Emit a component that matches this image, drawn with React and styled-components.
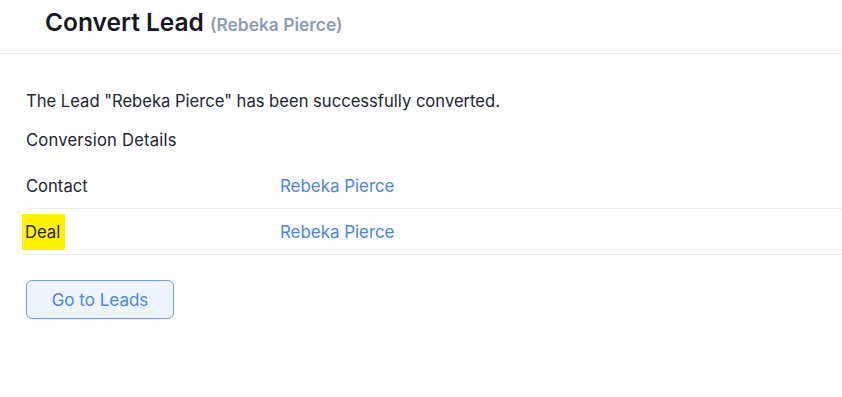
import React from "react";
import styled, { createGlobalStyle } from "styled-components";

const GlobalStyle = createGlobalStyle`
  html, body {
    margin: 0;
    padding: 0;
    background: #ffffff;
  }
  body {
    font-family: Inter, "Noto Sans", sans-serif;
    color: #1f2430;
  }
`;

const Page = styled.div`
  width: 842px;
  min-height: 397px;
  background: #ffffff;
`;

const Header = styled.header`
  display: flex;
  align-items: baseline;
  gap: 6px;
  height: 54px;
  box-sizing: border-box;
  padding: 7px 0 0 45px;
  border-bottom: 1px solid #ececec;
`;

const Title = styled.h1`
  margin: 0;
  font-size: 24.5px;
  font-weight: 600;
  color: #141824;
`;

const SubTitle = styled.span`
  font-size: 17.4px;
  font-weight: 600;
  color: #8e9bb6;
`;

const Body = styled.section`
  padding: 35px 0 0 26px;
`;

const Message = styled.p`
  margin: 0;
  font-size: 16.6px;
  line-height: 24px;
  color: #222633;
`;

const SectionTitle = styled.h2`
  margin: 15px 0 0;
  font-size: 16.6px;
  font-weight: 400;
  line-height: 24px;
  letter-spacing: 0.2px;
  color: #222633;
`;

const DetailList = styled.div`
  margin-top: 11px;
`;

const DetailRow = styled.div`
  display: grid;
  grid-template-columns: 252px 1fr;
  align-items: center;
  height: 46px;
  margin-left: 2px;
  border-bottom: 1px solid #ececec;
  box-sizing: border-box;
`;

const Label = styled.span`
  justify-self: start;
  font-size: 16.6px;
  color: #222633;
  padding: ${({ $marked }) => ($marked ? "8px 5px 8px 3px" : "0")};
  margin-left: ${({ $marked }) => ($marked ? "-6px" : "-2px")};
  background: ${({ $marked }) => ($marked ? "#fff200" : "transparent")};
`;

const Value = styled.a`
  font-size: 16.9px;
  color: #4a86e8;
  text-decoration: none;
`;

const Button = styled.button`
  margin-top: 25px;
  width: 148px;
  height: 39px;
  border: 1px solid #6c9ef0;
  border-radius: 6px;
  background: #eef5ff;
  color: #4a86e8;
  font-family: Inter, "Noto Sans", sans-serif;
  font-size: 17px;
  cursor: pointer;
`;

const details = [
  { label: "Contact", value: "Rebeka Pierce" },
  { label: "Deal", value: "Rebeka Pierce", marked: true },
];

export default function App() {
  return (
    <Page>
      <GlobalStyle />
      <Header>
        <Title>Convert Lead</Title>
        <SubTitle>(Rebeka Pierce)</SubTitle>
      </Header>
      <Body>
        <Message>The Lead "Rebeka Pierce" has been successfully converted.</Message>
        <SectionTitle>Conversion Details</SectionTitle>
        <DetailList>
          {details.map((d) => (
            <DetailRow key={d.label}>
              <Label $marked={d.marked}>{d.label}</Label>
              <Value href="#">{d.value}</Value>
            </DetailRow>
          ))}
        </DetailList>
        <Button>Go to Leads</Button>
      </Body>
    </Page>
  );
}
